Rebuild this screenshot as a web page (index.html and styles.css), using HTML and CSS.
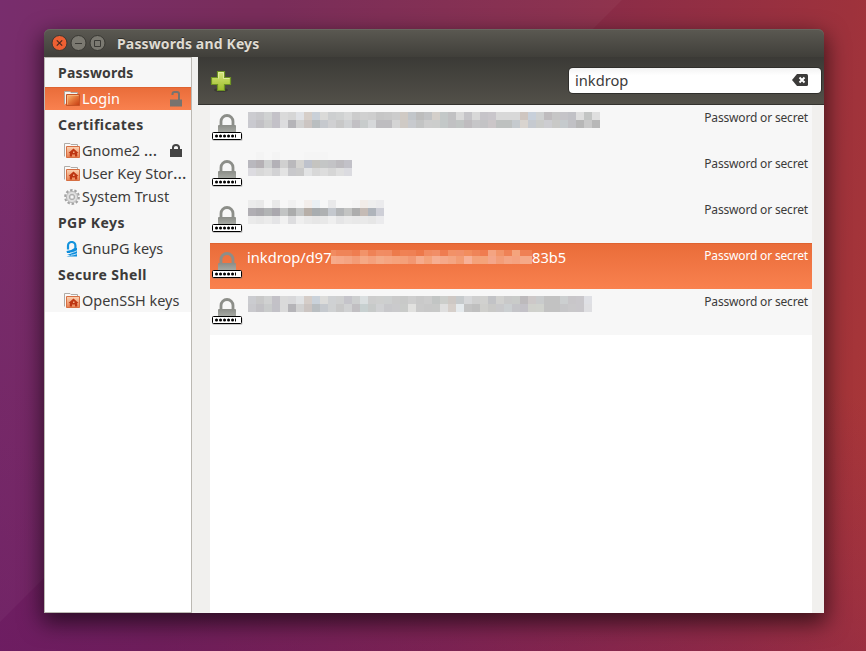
FILE: index.html
```html
<!DOCTYPE html>
<html lang="en">
<head>
<meta charset="utf-8">
<title>Passwords and Keys</title>
<link rel="stylesheet" href="styles.css">
</head>
<body>
<svg class="defs" width="0" height="0" aria-hidden="true">
  <defs>
    <linearGradient id="orange" x1="0" y1="0" x2="1" y2="1"><stop offset="0" stop-color="#fac47c"/><stop offset=".5" stop-color="#e5763a"/><stop offset="1" stop-color="#c43a10"/></linearGradient>
    <linearGradient id="peach" x1="0" y1="0" x2="0" y2="1"><stop offset="0" stop-color="#fbd3b4"/><stop offset="1" stop-color="#e9804f"/></linearGradient>
    <linearGradient id="steel" x1="0" y1="0" x2="0" y2="1"><stop offset="0" stop-color="#8b8d88"/><stop offset="1" stop-color="#adb0aa"/></linearGradient>
    <linearGradient id="green" x1="0" y1="0" x2="0" y2="1"><stop offset="0" stop-color="#d8e77c"/><stop offset="1" stop-color="#9dbd2c"/></linearGradient>
    <symbol id="folder" viewBox="0 0 16 16">
      <path d="M.5 13.500V.5H6l1 1h6.500v3" fill="#f6f4f2" stroke="#aaa69f"/>
      <path d="M2.500 3.500h13V14.500H2.500z" fill="url(#orange)" stroke="#c75325"/>
      <path d="M3.500 13.500v-9h11" fill="none" stroke="#f9b77f" stroke-opacity=".8"/>
    </symbol>
    <symbol id="home" viewBox="0 0 16 16">
      <path d="M.5 13.500V.5H6l1 1h6.500v2" fill="#faf9f8" stroke="#b0aca7"/>
      <path d="M2.500 3.500h13V14.500H2.500z" fill="url(#peach)" stroke="#d66f43"/>
      <path d="M9.500 5.500l5 4.500h-1.300v3.500h-2.200V11.500h-3v2H5.800V10H4.500z" fill="#bd3512"/>
      <path d="M9 8.500h1.500V10H9z" fill="#f3ac85"/>
    </symbol>
    <symbol id="gear" viewBox="0 0 16 16">
      <circle cx="8" cy="8" r="6.900" fill="none" stroke="#a2a2a2" stroke-width="2" stroke-dasharray="2.500 1.835"/>
      <circle cx="8" cy="8" r="5.600" fill="#dedede" stroke="#aaa" stroke-width=".8"/>
      <circle cx="8" cy="8" r="2.700" fill="#cfcfcf" stroke="#a2a2a2" stroke-width=".8"/>
      <circle cx="8" cy="8" r="1.300" fill="#f5f5f5"/>
    </symbol>
    <symbol id="gpg" viewBox="0 0 16 16">
      <path d="M4 8.500V4.700a3.700 3.700 0 0 1 7.400 0v3" fill="none" stroke="#1493dc" stroke-width="2.200"/>
      <path d="M2.500 10q5-.3 8-3H13V15.500H2.500l5-1.500H3l5-2H3z" fill="#0d8ddc"/>
      <path d="M6 12q4-.5 7-2.300M7 14.200q3-.2 6-1.500" fill="none" stroke="#e6f4fc" stroke-width=".8"/>
    </symbol>
    <symbol id="secret" viewBox="0 0 32 32">
      <path d="M10 14V9.500a6 6 0 0 1 12 0V14" fill="none" stroke="#8c8e89" stroke-width="2.800"/>
      <path d="M7 14q0-1 1-1h16q1 0 1 1v8H7z" fill="url(#steel)"/>
      <rect x="1.500" y="21.500" width="30" height="7.500" rx="1.500" fill="#777" opacity=".35"/>
      <rect x="1.500" y="20.500" width="29" height="7" rx="1" fill="#fff" stroke="#000"/>
      <path d="M5.500 24h17" stroke="#000" stroke-width="3" stroke-linecap="round" stroke-dasharray=".01 4"/>
      <path d="M24.500 22.500v3" stroke="#000"/>
    </symbol>
  </defs>
</svg>
<main class="desktop">
  <svg class="wallpaper" viewBox="0 0 866 651" aria-hidden="true">
    <path d="M0 0H622L0 622z" fill="#fff" opacity=".035"/>
  </svg>
  <section class="window">
    <header class="titlebar">
      <svg class="controls" width="58" height="18" viewBox="0 0 58 18">
        <circle cx="8.500" cy="9" r="7.500" fill="#ed6033" stroke="#393833"/>
        <path d="M5.800 6.300l5.400 5.400m0-5.400l-5.400 5.400" stroke="#4a2a20" stroke-width="1.200"/>
        <circle cx="27.500" cy="9" r="7.500" fill="#7b7971" stroke="#393833"/>
        <path d="M24 9.500h7" stroke="#3b3a36"/>
        <circle cx="46.500" cy="9" r="7.500" fill="#7b7971" stroke="#393833"/>
        <path d="M43.500 6.500h6v6h-6z" fill="none" stroke="#3b3a36"/>
      </svg>
      <h1 class="title">Passwords and Keys</h1>
    </header>
    <div class="body">
      <nav class="sidebar">
        <h2 class="group">Passwords</h2>
        <div class="place selected"><svg class="icon"><use href="#folder"/></svg><span>Login</span>
          <svg class="lock" width="14" height="16" viewBox="0 0 14 16"><path d="M3.500 4V3q0-2 2-2H8q2 0 2 2v6" fill="none" stroke="#77736f" stroke-width="2"/><path d="M1 8.500h12v7H1z" fill="#77736f"/></svg></div>
        <h2 class="group">Certificates</h2>
        <div class="place"><svg class="icon"><use href="#home"/></svg><span>Gnome2 <span class="dots">…</span></span>
          <svg class="lock" width="14" height="16" viewBox="0 0 14 16"><path d="M4 7V4.500Q4 2 7 2t3 2.500V7" fill="none" stroke="#444" stroke-width="2"/><path d="M1 6h12v8H1z" fill="#444"/></svg></div>
        <div class="place"><svg class="icon"><use href="#home"/></svg><span>User Key Stor<span class="dots">…</span></span></div>
        <div class="place"><svg class="icon"><use href="#gear"/></svg><span>System Trust</span></div>
        <h2 class="group">PGP Keys</h2>
        <div class="place"><svg class="icon"><use href="#gpg"/></svg><span>GnuPG keys</span></div>
        <h2 class="group">Secure Shell</h2>
        <div class="place"><svg class="icon"><use href="#home"/></svg><span>OpenSSH keys</span></div>
      </nav>
      <section class="content">
        <div class="toolbar">
          <svg class="add" width="22" height="23" viewBox="0 0 22 23"><ellipse cx="11" cy="20" rx="7" ry="2" fill="#292824" opacity=".5"/><path d="M7.500 1.500h7v6h6v7h-6v6h-7v-6h-6v-7h6z" fill="url(#green)" stroke="#6f9423" stroke-width="1.200"/><path d="M8.500 8.500v-6h5v6h6" fill="none" stroke="#edf5b4" opacity=".7"/></svg>
          <div class="search"><span>inkdrop</span>
            <svg class="clear" width="16" height="12" viewBox="0 0 16 12"><path d="M5 0h9.500q1.500 0 1.500 1.500v9q0 1.500-1.500 1.500H5L0 6z" fill="#3c3b3a"/><path d="M7.500 3.500l5 5m0-5l-5 5" stroke="#fff" stroke-width="2"/></svg></div>
        </div>
        <div class="list">
          <div class="row"><svg class="key"><use href="#secret"/></svg><div class="name"><div class="mosaic" data-mosaic="0"></div></div><span class="kind">Password or secret</span></div>
          <div class="row"><svg class="key"><use href="#secret"/></svg><div class="name"><div class="mosaic high" data-mosaic="1"></div></div><span class="kind">Password or secret</span></div>
          <div class="row"><svg class="key"><use href="#secret"/></svg><div class="name"><div class="mosaic mid" data-mosaic="2"></div></div><span class="kind">Password or secret</span></div>
          <div class="row selected"><svg class="key"><use href="#secret"/></svg><div class="name"><span class="prefix">inkdrop/d97</span><div class="mosaic inline" data-mosaic="3"></div><span>83b5</span></div><span class="kind">Password or secret</span></div>
          <div class="row"><svg class="key"><use href="#secret"/></svg><div class="name"><div class="mosaic" data-mosaic="4"></div></div><span class="kind">Password or secret</span></div>
        </div>
      </section>
    </div>
  </section>
</main>
<script src="mosaic.js"></script>
</body>
</html>
```
FILE: styles.css
```css
* { box-sizing: border-box; }
body { margin: 0; font: 14.67px "Noto Sans", "Open Sans", sans-serif; color: #3c3b3a; }
h1, h2 { margin: 0; font-size: inherit; }
svg { display: block; flex: none; }
.defs { position: absolute; }
.desktop { position: relative; width: 866px; height: 651px; padding: 29px 42px 38px 44px; overflow: hidden; background: linear-gradient(15deg, rgba(100, 18, 100, .45), rgba(100, 18, 100, 0) 55%), linear-gradient(100deg, #742668 0%, #752654 28%, #872b4a 57%, #9e323c 87%, #ac3836 100%); }
.wallpaper { position: absolute; top: 0; left: 0; width: 866px; height: 651px; }
.window { position: relative; height: 584px; display: flex; flex-direction: column; border-radius: 6px 6px 0 0; box-shadow: 0 8px 22px 2px rgba(0, 0, 0, .6); }
.titlebar { height: 28px; display: flex; align-items: center; padding-left: 7px; gap: 8px; border-radius: 6px 6px 0 0; background: linear-gradient(#5b5952, #403f3a); box-shadow: inset 0 1px #686760; }
.title { color: #dfdbd2; font-weight: 700; font-size: 14px; line-height: 28px; padding-top: 2px; letter-spacing: .15px; text-shadow: 0 -1px #302f2b; white-space: nowrap; }
.body { flex: 1; display: flex; gap: 6px; background: #f1f0ee; }
.sidebar { width: 148px; flex: none; background: #fff; border: 1px solid #bcb9b3; }
.group { height: 29px; line-height: 30px; padding-left: 13px; font-size: 14px; font-weight: 700; letter-spacing: .42px; background: #f7f7f7; white-space: nowrap; }
.group:first-child { letter-spacing: .2px; }
.place { height: 23px; display: flex; align-items: center; gap: 2px; padding-left: 19px; padding-right: 8px; line-height: 23px; font-size: 14.45px; background: #f7f7f7; white-space: nowrap; }
.dots { font-size: 17px; line-height: 1; }
.selected { color: #fff; background: linear-gradient(#e96c39, #f9814f); box-shadow: inset 0 1px #df6330; }
.icon { width: 16px; height: 16px; }
.lock { margin-left: auto; }
.content { flex: 1; display: flex; flex-direction: column; min-width: 0; }
.toolbar { height: 48px; display: flex; align-items: center; justify-content: space-between; padding: 0 3px 0 12px; background: linear-gradient(#3b3a36, #525049); border-bottom: 1px solid #33322e; }
.add { margin-top: 2px; }
.search { width: 252px; height: 25px; display: flex; align-items: center; justify-content: space-between; padding: 0 13px 0 6px; line-height: 23px; background: linear-gradient(#f3f3f3, #fff 30%); border-radius: 4px; box-shadow: 0 0 0 1px #302f2c; }
.clear { margin-top: -1px; }
.list { flex: 1; margin: 0 12px; background: #fff; }
.row { height: 46px; display: flex; align-items: flex-start; padding-right: 4px; background: #f7f7f7; }
.row.selected { background: linear-gradient(#e96c39, #f9814f); }
.key { width: 32px; height: 32px; margin: 7px 5px 0 1px; }
.name { flex: 1; display: flex; line-height: 20px; padding-top: 4px; margin-left: -1px; }
.prefix { width: 84px; white-space: nowrap; }
.kind { font-size: 12px; line-height: 16px; margin-top: 5px; letter-spacing: -.17px; white-space: nowrap; }
.mosaic { display: grid; grid-auto-rows: 8px; align-content: start; margin: 3px 0 0 1px; }
.mosaic.high { margin-top: -3px; }
.mosaic.mid { margin-top: -1px; }
.mosaic.inline { width: 201px; margin: 3px 0 0; grid-template-rows: 6px 8px; }
```
FILE: mosaic.js
```js
// Each redacted name is a list of rows of cell colours.
const names = [
  ["ccccd0 c8c8cb d0d2d2 c4c2c8 dadada d6d6d6 e0e2e6 d6cec8 c9d0d8 dadad8 cdcfd0 d0d2d2 d8d9d9 cccccc d0d0d0 cecece c6c6c6 c8c8c8 cccccc d0cac4 c2c6ca bdbdbd c2c3c5 d4cfca c3c8c8 c1c1c3 d9d9d9 c5c4c8 d8d8d8 c6c4c9 c9c6cb d8d8d8 d8d8d8 d8d8d8 cfc6c0 c8d0da cfd1d1 bfbcbe c6c6c6 c5c4c8 c1c1c6 dedede c3c5c4 dfdfdf",
   "c9c9cf c2c1c5 cccdcd c3c1c8 dcdcde b5b4b8 d2d2d2 ccc5c2 b9bec0 c6c9ce d0d0d2 c8c8c8 d0d2d4 c2c0c4 c8cccc d6d8da bebdc0 bebdc0 d4d4d4 cfcac5 c8cace c3c4c4 cdcdcd cccdcc c3c8c8 c1c1c3 c1c5c4 bfbcbf c6c6c8 c3c3c5 cbc6c8 bec1c0 bec1c0 c5cace d9d4cf c6cad0 cbccca cdcdd1 c9c9c7 c5cacd c1c1c5 b7b7b7 c9c9c9 b8b8b8"],
  ["f7f7f7 f4f4f4 f7f7f7 f4f4f4 f7f7f7 f7f7f7 f7f7f7 f5f5f5 f5f5f5 f5f5f5 f7f7f7 f7f7f7 f7f7f7",
   "b9b8be b5b1b5 cdcfcf b3b1b7 d0d0d0 bab9bc d4d3d0 bec2cc c5c4c0 c4c6c6 c3c3c6 bdbbbf c2c1c8",
   "dcdbe0 d8d8d8 dddddd d2d2d4 e3e3e3 c8c8cb cacaca e2e3e4 d8d8d8 dddddd d6d6d6 dfdfdf dbdbe0"],
  ["ececec e9e9e9 f7f7f7 e9e9e9 f7f7f7 f1f1f1 f7f7f7 f3eeeb eaf0f4 f7f7f7 e9e9ea f7f7f7 f7f7f7 f4f4f4 f2ece8 eeeeee ebebed",
   "b0aeb3 aaa9ad b2b4b5 aaa8ae c2c4c4 abacac c4c6c6 b7afa8 a8adb0 afb1b2 c4c8ce b3b5b7 c3c4c3 adadad c5bbb5 afb4bb cecfd7",
   "eaeaea e7e7e7 ebebeb e4e4e6 f1f1f1 dddddf efefef e9e9e9 e6e6e6 e8e8e8 efefef e5e5e6 eaeaea e8e8e8 e9e9e9 e6e6e6 ebebed"],
  ["f18b60 ef8458 ef8458 ef7d50 f29369 ef8256 f18c63 f18b62 ed7a4b f08154 ef8054 ed784a f18b62 f18e67 ef7c50 f29167 f1906a f28d5e ef8458 f07c50 f4a482 f29469 ef8256 f4a47d ef8054",
   "f6ab8a f6a887 f4a482 f39c77 f5a985 f4a17d f4aa87 f5a581 f5a27c f4a07a f29772 f6ab8c f4a27a f6ae92 f5a98a f4a582 f39c73 f7b198 f4a27a f4a37a f4a68a f39d78 f4a584 f4a280 f5a988"],
  ["cbccd0 c8c8c8 d0d1d1 c3c1c7 dadada d8d8da e0e2e4 d5cdc8 cad2da dcdcda cfd1d3 cfd0d0 c5c4ca cdcfcf dadfe0 cdcdcd cecfce cdcfcf cacaca c8c9c8 cecece c9c9c9 cccccc c2c5c4 cccecb cec8c4 c6cacc d6d7d9 cfcfcf d1d1cf c2c3c6 d1d1cf c9c9c9 c9cbc9 bdbabc cdc8c8 c9cbcc c2c2c2 c2c2c2 cccfd0 c8c6c9 c9c7cb dfe0e5",
   "c9c9cd c2c1c5 c9cbcb c2c1c7 dadada b5b4b8 d1d1d1 cbc4c1 b9bec1 c5c9ce cfd1d2 c8c8c8 d0d1d2 c1bfc2 c7d0d0 c7cac9 d0d1d3 c8c8cb cacacc c9cbc9 e1e1df cacaca c8c8c8 c8c9c8 dfdfdf d6cfca e5eaed c3c3c3 bfbfbf cfcfcc c9c9c7 c9c9cb cbcfd1 c4c4c8 c3c1c7 d0d1cc d0d2cd c2c2c2 c2c2c2 c6c6c8 c9c8ca c9c7cb dfdfe2"]
];
document.querySelectorAll("[data-mosaic]").forEach(el => {
  const rows = names[el.dataset.mosaic].map(r => r.split(" "));
  const inline = el.classList.contains("inline");
  el.style.gridTemplateColumns = inline
    ? "5px repeat(24, 8px) 4px"
    : `repeat(${rows[0].length}, 8px)`;
  rows.forEach(row => {
    if (inline) row.push(row[24]);
    row.forEach(color => {
      const cell = document.createElement("i");
      cell.style.background = "#" + color;
      el.append(cell);
    });
  });
});
```
